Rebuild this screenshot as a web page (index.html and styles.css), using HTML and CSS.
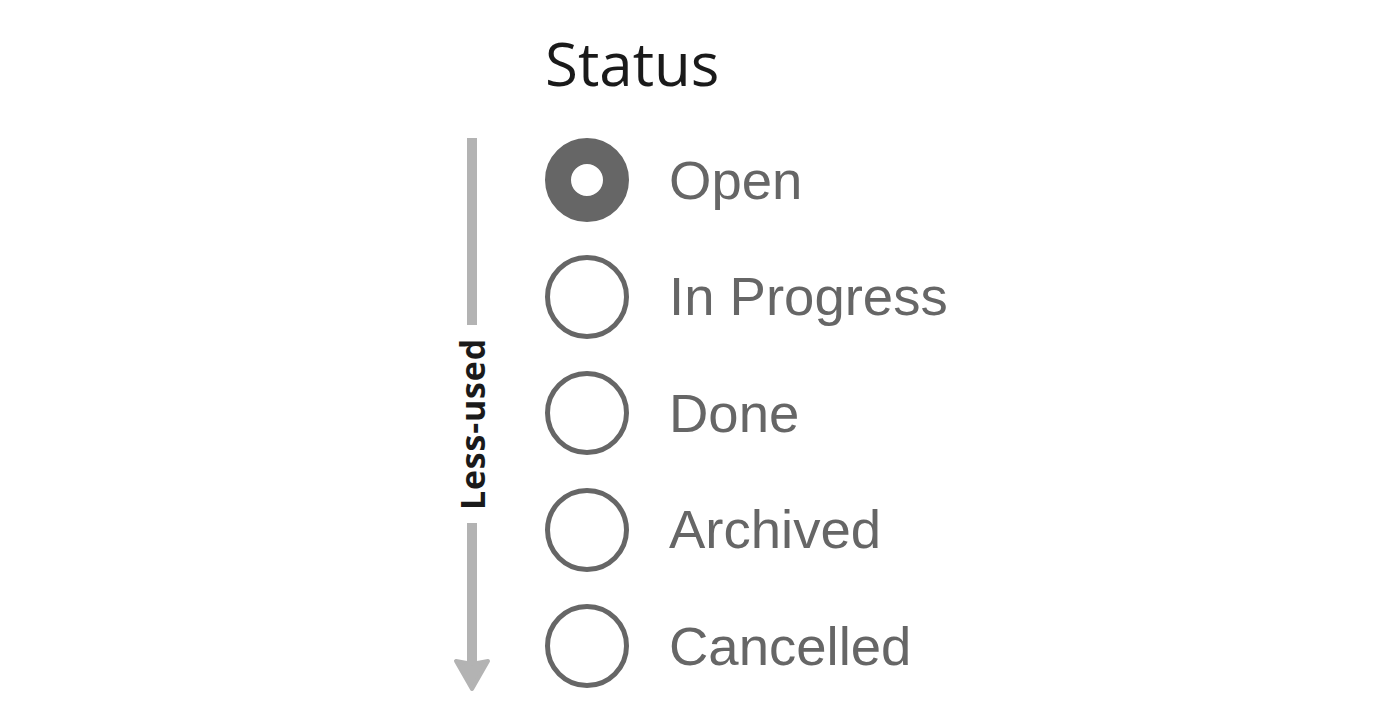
FILE: index.html
```html
<!DOCTYPE html>
<html lang="en">
<head>
    <meta charset="UTF-8">
    <title>Status</title>
    <link rel="stylesheet" href="styles.css">
</head>
<body>
    <div class="status-panel">
        <h1 class="title">Status</h1>

        <div class="axis">
            <div class="axis-bar"></div>
            <span class="axis-label">Less-used</span>
            <svg class="axis-arrow" width="38" height="170" viewBox="0 0 38 170">
                <rect x="14" y="0" width="10" height="150" fill="#b3b3b3"/>
                <polygon points="3,138 19,141 35,138 19,166" fill="#b3b3b3" stroke="#b3b3b3" stroke-width="4" stroke-linejoin="round"/>
            </svg>
        </div>

        <ul class="options">
            <li class="option"><span class="radio checked"></span><span class="label">Open</span></li>
            <li class="option"><span class="radio"></span><span class="label">In Progress</span></li>
            <li class="option"><span class="radio"></span><span class="label">Done</span></li>
            <li class="option"><span class="radio"></span><span class="label">Archived</span></li>
            <li class="option"><span class="radio"></span><span class="label">Cancelled</span></li>
        </ul>
    </div>
</body>
</html>
```

FILE: styles.css
```css
body {
    margin: 0;
    background-color: #fff;
}
.status-panel {
    display: grid;
    grid-template-columns: 38px auto;
    column-gap: 54px;
    padding: 33px 0 0 453px;
}
.title {
    grid-column: 2;
    grid-row: 1;
    margin: 0 0 45px 0;
    font-family: "Open Sans", sans-serif;
    font-size: 60px;
    font-weight: normal;
    line-height: 1;
    color: #1a1a1a;
}
.axis {
    grid-column: 1;
    grid-row: 2;
    display: flex;
    flex-direction: column;
    align-items: center;
}
.axis-bar {
    width: 10px;
    height: 187px;
    background-color: #b3b3b3;
}
.axis-label {
    writing-mode: vertical-rl;
    transform: rotate(180deg);
    margin: 13px 0 13px 0;
    font-family: "Open Sans", sans-serif;
    font-weight: bold;
    font-size: 34px;
    letter-spacing: 0.8px;
    line-height: 38px;
    color: #1a1a1a;
}
.axis-arrow {
    display: block;
}
.options {
    grid-column: 2;
    grid-row: 2;
    list-style: none;
    margin: 0;
    padding: 0;
    display: flex;
    flex-direction: column;
    gap: 32.5px;
}
.option {
    display: flex;
    align-items: center;
    gap: 40px;
    height: 84px;
}
.radio {
    width: 84px;
    height: 84px;
    box-sizing: border-box;
    border: 5px solid #666;
    border-radius: 50%;
    background-color: #fff;
    flex-shrink: 0;
}
.radio.checked {
    border-width: 26px;
}
.label {
    font-family: "Liberation Sans", Arial, sans-serif;
    font-size: 54.5px;
    color: #666;
}
```
